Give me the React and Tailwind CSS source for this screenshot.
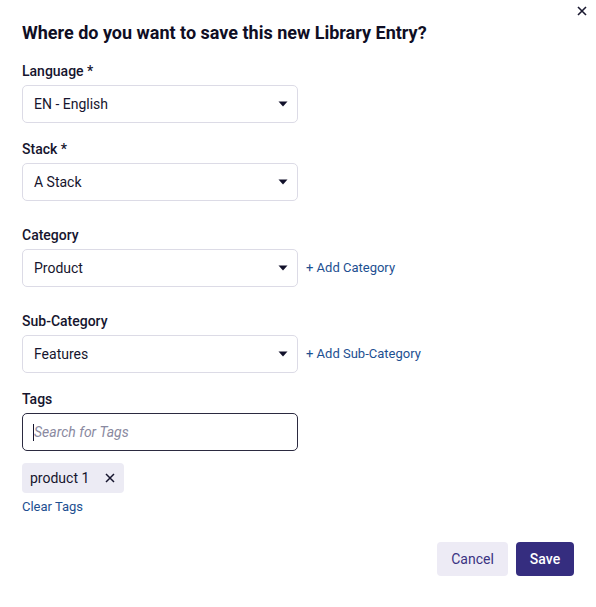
import React from "react";

function Caret() {
  return (
    <svg width="10" height="6" viewBox="0 0 10 6" className="shrink-0">
      <path d="M0.5 0.5 L9.5 0.5 L5 5.5 Z" fill="#12112b" />
    </svg>
  );
}

function Select({ value }) {
  return (
    <div className="w-[276px] h-[38px] border border-[#dcdbe6] rounded-[5px] bg-white flex items-center justify-between pl-[11px] pr-[9px] text-[14px] text-[#16152e]">
      <span>{value}</span>
      <Caret />
    </div>
  );
}

function Label({ children, className = "" }) {
  return (
    <div className={"text-[14px] leading-[20px] font-medium text-[#16152e] " + className}>{children}</div>
  );
}

export default function App() {
  return (
    <div
      className="relative w-[596px] h-[607px] bg-white"
      style={{ fontFamily: "Roboto, 'Noto Sans', sans-serif" }}
    >
      <button className="absolute right-[8px] top-[5px] w-[12px] h-[12px] flex items-center justify-center">
        <svg width="10" height="10" viewBox="0 0 10 10">
          <path d="M1 1 L9 9 M9 1 L1 9" stroke="#1a1930" strokeWidth="1.6" />
        </svg>
      </button>
      <div className="flex flex-col px-[22px] pt-[21px]">
        <h1 className="text-[18px] leading-[24px] font-bold text-[#0f0e24]">
          Where do you want to save this new Library Entry?
        </h1>

        <Label className="mt-[16px]">Language *</Label>
        <div className="mt-[4px]">
          <Select value="EN - English" />
        </div>

        <Label className="mt-[16px]">Stack *</Label>
        <div className="mt-[4px]">
          <Select value="A Stack" />
        </div>

        <Label className="mt-[24px]">Category</Label>
        <div className="mt-[4px] flex items-center gap-[8px]">
          <Select value="Product" />
          <span className="text-[13px] text-[#1d4f91]">+ Add Category</span>
        </div>

        <Label className="mt-[24px]">Sub-Category</Label>
        <div className="mt-[4px] flex items-center gap-[8px]">
          <Select value="Features" />
          <span className="text-[13px] text-[#1d4f91]">+ Add Sub-Category</span>
        </div>

        <Label className="mt-[16px]">Tags</Label>
        <div className="mt-[4px] w-[276px] h-[38px] border border-[#2b2a40] rounded-[5px] flex items-center pl-[10px] text-[14px]">
          <span className="w-px h-[17px] bg-[#16152e]" />
          <span className="italic text-[#8a89a0]">Search for Tags</span>
        </div>

        <div className="mt-[12px] self-start h-[30px] bg-[#ecebf4] rounded-[4px] flex items-center pl-[8px] pr-[9px] text-[14px] text-[#16152e]">
          <span>product 1</span>
          <svg width="10" height="10" viewBox="0 0 10 10" className="ml-[16px]">
            <path d="M1 1 L9 9 M9 1 L1 9" stroke="#16152e" strokeWidth="1.5" />
          </svg>
        </div>

        <div className="mt-[6px] text-[13px] leading-[16px] text-[#1d4f91]">Clear Tags</div>

        <div className="mt-[27px] flex justify-end gap-[8px]">
          <button className="w-[71px] h-[34px] rounded-[4px] bg-[#edebf5] text-[14px] text-[#3a3282]">Cancel</button>
          <button className="w-[58px] h-[34px] rounded-[4px] bg-[#352d7f] text-[14px] font-medium text-white">Save</button>
        </div>
      </div>
    </div>
  );
}
